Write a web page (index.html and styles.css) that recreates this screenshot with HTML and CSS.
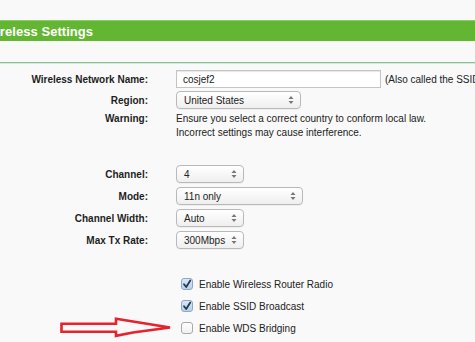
FILE: index.html
```html
<!DOCTYPE html>
<html>
<head>
<meta charset="utf-8">
<link rel="stylesheet" href="styles.css">
</head>
<body>
<div class="page">
  <div class="titlebar"><span class="title">Wireless Settings</span></div>
  <div class="rule"></div>
  <div class="form">
    <div class="label">Wireless Network Name:</div>
    <div class="value"><div class="textbox">cosjef2</div><span class="note">(Also called the SSID)</span></div>

    <div class="label">Region:</div>
    <div class="value"><div class="select w-region"><span>United States</span><svg class="arr" width="6" height="10" viewBox="0 0 6 10"><path d="M3 1 L5.5 4 H0.5 Z M3 9 L5.5 6 H0.5 Z" fill="#777"/></svg></div></div>

    <div class="label warn-label">Warning:</div>
    <div class="value warn">Ensure you select a correct country to conform local law.<br>Incorrect settings may cause interference.</div>
  </div>

  <div class="form form2">
    <div class="label">Channel:</div>
    <div class="value"><div class="select w-small"><span>4</span><svg class="arr" width="6" height="10" viewBox="0 0 6 10"><path d="M3 1 L5.5 4 H0.5 Z M3 9 L5.5 6 H0.5 Z" fill="#777"/></svg></div></div>

    <div class="label">Mode:</div>
    <div class="value"><div class="select w-mode"><span>11n only</span><svg class="arr" width="6" height="10" viewBox="0 0 6 10"><path d="M3 1 L5.5 4 H0.5 Z M3 9 L5.5 6 H0.5 Z" fill="#777"/></svg></div></div>

    <div class="label">Channel Width:</div>
    <div class="value"><div class="select w-small"><span>Auto</span><svg class="arr" width="6" height="10" viewBox="0 0 6 10"><path d="M3 1 L5.5 4 H0.5 Z M3 9 L5.5 6 H0.5 Z" fill="#777"/></svg></div></div>

    <div class="label">Max Tx Rate:</div>
    <div class="value"><div class="select w-small"><span>300Mbps</span><svg class="arr" width="6" height="10" viewBox="0 0 6 10"><path d="M3 1 L5.5 4 H0.5 Z M3 9 L5.5 6 H0.5 Z" fill="#777"/></svg></div></div>
  </div>

  <div class="checks">
    <div class="check"><span class="box on"><svg width="10" height="10" viewBox="0 0 10 10"><path d="M2 5.2 L4.2 8 L8.3 1.5" fill="none" stroke="#2b3a4a" stroke-width="1.8" stroke-linecap="round" stroke-linejoin="round"/></svg></span>Enable Wireless Router Radio</div>
    <div class="check"><span class="box on"><svg width="10" height="10" viewBox="0 0 10 10"><path d="M2 5.2 L4.2 8 L8.3 1.5" fill="none" stroke="#2b3a4a" stroke-width="1.8" stroke-linecap="round" stroke-linejoin="round"/></svg></span>Enable SSID Broadcast</div>
    <div class="check"><span class="box"></span>Enable WDS Bridging</div>
  </div>

  <svg class="redarrow" width="120" height="28" viewBox="56 314 120 28">
    <path d="M61.5 323.8 H116 V318.8 L133 321.5 L170 327.5 L133 332.5 L116 335.8 V331.8 H61.5 Z" fill="none" stroke="#e4232c" stroke-width="2.6" stroke-linejoin="miter"/>
  </svg>
</div>
</body>
</html>
```
FILE: styles.css
```css
html, body {
  margin: 0;
  padding: 0;
}
body {
  background: #f9f9f9;
  font-family: "Liberation Sans", Arial, Helvetica, sans-serif;
  color: #222;
  width: 475px;
  height: 342px;
  overflow: hidden;
}
.page {
  position: relative;
  padding-top: 20px;
  height: 322px;
}
.titlebar {
  height: 21px;
  background: #63b632;
  border-top: 1px solid #8ccc66;
  box-sizing: border-box;
  display: flex;
  align-items: center;
}
.title {
  color: #fff;
  font-weight: bold;
  font-size: 13px;
  margin-left: -16px;
  white-space: nowrap;
  letter-spacing: 0.05px;
}
.rule {
  margin-top: 21px;
  height: 1px;
  background: #86c095;
  box-shadow: 0 1px 0 #d7ead9;
}
.form {
  display: grid;
  grid-template-columns: 148px 1fr;
  column-gap: 28px;
  row-gap: 3px;
  margin-top: 7px;
  font-size: 10px;
  align-items: center;
}
.label {
  text-align: right;
  font-weight: bold;
  color: #1e1e1e;
  white-space: nowrap;
}
.value {
  display: flex;
  align-items: center;
  white-space: nowrap;
  height: 18px;
}
.textbox {
  width: 205px;
  height: 18px;
  box-sizing: border-box;
  border: 1px solid #c4c4c4;
  background: #fff;
  box-shadow: inset 0 1px 1px #e6e6e6;
  padding-left: 6px;
  display: flex;
  align-items: center;
  color: #222;
}
.note {
  margin-left: 4px;
  color: #222;
}
.select {
  height: 18px;
  box-sizing: border-box;
  border: 1px solid #b9b9b9;
  border-radius: 4px;
  background: linear-gradient(#ffffff, #efefef);
  box-shadow: 0 1px 0 rgba(0,0,0,0.04);
  display: flex;
  align-items: center;
  justify-content: space-between;
  padding: 0 6px 0 7px;
  color: #222;
}
.w-region { width: 125px; }
.w-mode { width: 127px; }
.w-small { width: 68px; }
.arr { display: block; }
.warn-label {
  align-self: start;
  line-height: 14px;
}
.warn {
  height: auto;
  display: block;
  line-height: 14px;
  color: #222;
  align-self: start;
}
.form2 {
  margin-top: 25px;
  row-gap: 4px;
}
.checks {
  margin-top: 24px;
  padding-left: 181px;
  font-size: 10px;
  color: #222;
}
.check {
  height: 22px;
  display: flex;
  align-items: center;
}
.box {
  width: 12px;
  height: 12px;
  box-sizing: border-box;
  border: 1px solid #a9a9a9;
  border-radius: 3px;
  background: linear-gradient(#ffffff, #f0f0f0);
  margin-right: 6px;
  display: flex;
  align-items: center;
  justify-content: center;
}
.box.on {
  background: linear-gradient(#d9e8f8, #b8d1ee);
  border-color: #8ea7c4;
}
.redarrow {
  position: absolute;
  left: 56px;
  top: 314px;
}
```
